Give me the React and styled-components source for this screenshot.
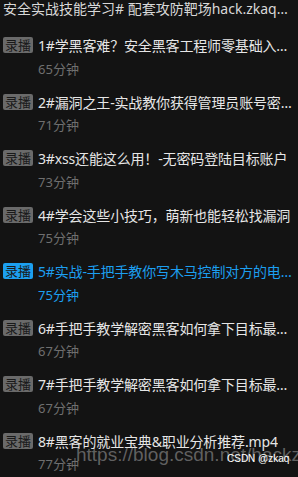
import React from 'react'
import styled, { createGlobalStyle } from 'styled-components'

const GlobalStyle = createGlobalStyle`
  html, body {
    margin: 0;
    padding: 0;
    background: #131313;
  }
  body {
    font-family: "Noto Sans", "Noto Sans CJK SC", sans-serif;
  }
`

const Page = styled.div`
  position: relative;
  width: 298px;
  height: 477px;
  overflow: hidden;
  background: #131313;
  box-sizing: border-box;
  padding: 0 2px 0 3px;
`

const Header = styled.div`
  font-size: 14px;
  line-height: 18px;
  color: #d8d8d8;
  white-space: nowrap;
  overflow: hidden;
  text-overflow: ellipsis;
  margin-right: 6px;
  margin-bottom: 15.5px;
`

const Lesson = styled.div`
  display: flex;
  flex-direction: column;
  padding-bottom: 9.5px;
`

const TitleRow = styled.div`
  display: flex;
  align-items: center;
  height: 23px;
  gap: 5px;
`

const Badge = styled.span`
  flex: none;
  width: 30px;
  height: 16px;
  border-radius: 2px;
  background: ${p => (p.active ? '#1c9ff0' : '#6a6a6a')};
  color: #1a1a1a;
  font-size: 13px;
  line-height: 16px;
  text-align: center;
`

const Title = styled.span`
  min-width: 0;
  font-size: 14px;
  letter-spacing: -0.15px;
  color: ${p => (p.active ? '#1c9ff0' : '#e6e6e6')};
  white-space: nowrap;
  overflow: hidden;
  text-overflow: ellipsis;
`

const Duration = styled.div`
  padding-left: 35px;
  font-size: 13px;
  line-height: 24px;
  color: ${p => (p.active ? '#1c9ff0' : '#6f6f6f')};
`

const Watermark = styled.div`
  position: absolute;
  left: 76px;
  top: 444px;
  font-family: "Liberation Sans", Arial, sans-serif;
  font-size: 19px;
  color: rgba(150, 150, 150, 0.6);
  white-space: nowrap;
`

const Signature = styled.div`
  position: absolute;
  left: 227px;
  top: 453px;
  font-family: "Liberation Sans", Arial, sans-serif;
  font-size: 10px;
  color: #ffffff;
  white-space: nowrap;
`

const lessons = [
  { title: '1#学黑客难？安全黑客工程师零基础入门指南', mins: 65 },
  { title: '2#漏洞之王-实战教你获得管理员账号密码权限', mins: 71 },
  { title: '3#xss还能这么用！-无密码登陆目标账户', mins: 73 },
  { title: '4#学会这些小技巧，萌新也能轻松找漏洞', mins: 75 },
  { title: '5#实战-手把手教你写木马控制对方的电脑主机', mins: 75, active: true },
  { title: '6#手把手教学解密黑客如何拿下目标最高权限', mins: 67 },
  { title: '7#手把手教学解密黑客如何拿下目标最高权限', mins: 67 },
  { title: '8#黑客的就业宝典&职业分析推荐.mp4', mins: 77 },
]

const App = () => {
  return (
    <Page>
      <GlobalStyle />
      <Header>安全实战技能学习# 配套攻防靶场hack.zkaq.cn</Header>
      {lessons.map((l, i) => (
        <Lesson key={i}>
          <TitleRow>
            <Badge active={l.active}>录播</Badge>
            <Title active={l.active}>{l.title}</Title>
          </TitleRow>
          <Duration active={l.active}>{l.mins}分钟</Duration>
        </Lesson>
      ))}
      <Watermark>https://blog.csdn.net/hackzkaq</Watermark>
      <Signature>CSDN @zkaq</Signature>
    </Page>
  )
}

export default App
